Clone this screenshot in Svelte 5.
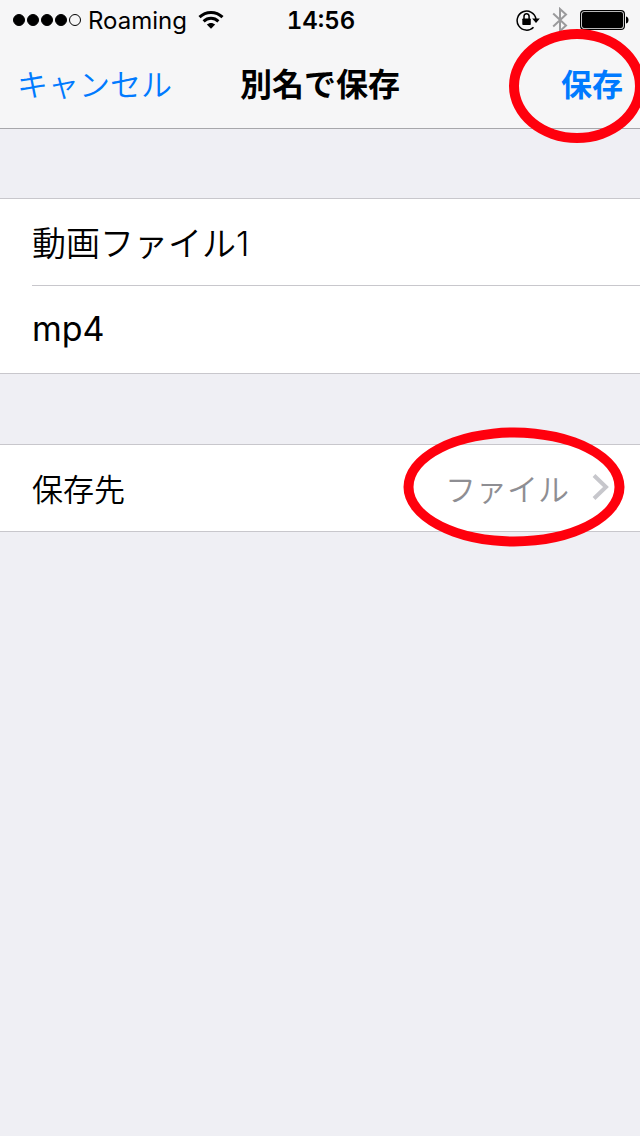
<script>
    let name = $state('動画ファイル1');
    let extension = $state('mp4');

    const signal = [true, true, true, true, false];
</script>

<div class="screen">
    <header>
        <div class="status-bar">
            <div class="status-left">
                <div class="signal">
                    {#each signal as on}
                        <span class="dot" class:on></span>
                    {/each}
                </div>
                <span>Roaming</span>
                <svg class="wifi" width="26" height="20" viewBox="0 0 26 20" aria-hidden="true">
                    <g fill="none" stroke="#000" stroke-width="3">
                        <path d="M1.5 7.2C8 0.9 18 0.9 24.500 7.200" />
                        <path d="M5.600 11.300C9.900 7.300 16.100 7.300 20.400 11.300" />
                    </g>
                    <path d="M8.800 14.500C11.200 12.400 14.800 12.400 17.200 14.500L13 18.800Z" />
                </svg>
            </div>
            <time class="clock">14:56</time>
            <div class="status-right">
                <svg width="24" height="22" viewBox="0 0 24 22" aria-hidden="true">
                    <path d="M17.500 18.200A9.500 9.500 0 1 1 20 10" fill="none" stroke="#000" stroke-width="1.500" />
                    <path d="M16.200 9.500H23.800L20 14Z" />
                    <rect x="6.300" y="9.500" width="8.500" height="6.500" rx="0.800" />
                    <path d="M8 10V7.600A2.550 2.800 0 0 1 13.100 7.600V10" fill="none" stroke="#000" stroke-width="1.500" />
                </svg>
                <svg width="16" height="26" viewBox="0 0 16 26" aria-hidden="true">
                    <path d="M1.200 6.500L14 18.500L8 24V2L14 7.500L1.200 19.500" fill="none" stroke="#9a9a9c" stroke-width="2" />
                </svg>
                <svg width="49" height="20" viewBox="0 0 49 20" aria-hidden="true">
                    <rect x="0.600" y="0.600" width="43.800" height="18.800" rx="3.500" fill="none" stroke="#000" stroke-width="1.200" />
                    <rect x="2" y="2" width="41" height="16" rx="2" />
                    <path d="M46 6.500C48 7 48.500 8.500 48.500 10S48 13 46 13.500Z" />
                </svg>
            </div>
        </div>
        <nav>
            <button class="cancel">キャンセル</button>
            <h1>別名で保存</h1>
            <button class="save">保存<span class="ring ring-save"></span></button>
        </nav>
    </header>

    <main>
        <div class="group">
            <div class="row">
                <input type="text" aria-label="ファイル名" bind:value={name} />
            </div>
            <div class="row">
                <input class="extension" type="text" aria-label="拡張子" bind:value={extension} />
            </div>
        </div>

        <div class="group">
            <button class="row destination">
                <span>保存先</span>
                <span class="value">
                    ファイル
                    <svg width="18" height="28" viewBox="0 0 18 28" aria-hidden="true">
                        <path d="M2 2.500L14 14L2 25.500" fill="none" stroke="#c7c7cc" stroke-width="4" />
                    </svg>
                    <span class="ring ring-value"></span>
                </span>
            </button>
        </div>
    </main>
</div>

<style>
    :global(body) {
        background: #efeff4;
    }

    .screen {
        min-height: 100vh;
        overflow-x: hidden;
        color: #000;
        font-family: Inter, 'Noto Sans CJK JP', sans-serif;
    }

    header {
        background: #f6f6f7;
        border-bottom: 1px solid #a7a7ab;
    }

    .status-bar {
        display: grid;
        grid-template-columns: 1fr auto 1fr;
        align-items: center;
        height: 40px;
        padding: 0 11px 0 13px;
        font-size: 24px;
    }

    .status-left,
    .status-right {
        display: flex;
        align-items: center;
    }

    .status-left {
        gap: 7px;
    }

    .status-right {
        justify-content: flex-end;
        gap: 12px;
    }

    .signal {
        display: flex;
        gap: 2px;
    }

    .dot {
        box-sizing: border-box;
        width: 12px;
        height: 12px;
        border: 1px solid #000;
        border-radius: 50%;
    }

    .dot.on {
        background: #000;
    }

    .wifi {
        margin-left: 4px;
    }

    .clock {
        font-weight: 600;
        font-variant-numeric: tabular-nums;
    }

    nav {
        display: grid;
        grid-template-columns: 1fr auto 1fr;
        align-items: center;
        box-sizing: border-box;
        height: 88px;
        padding: 0 17px 4px;
    }

    button {
        margin: 0;
        padding: 0;
        border: none;
        background: none;
        color: inherit;
        font: inherit;
        cursor: pointer;
    }

    h1 {
        margin: 0;
        font-size: 32px;
        font-weight: 700;
    }

    .cancel,
    .save {
        position: relative;
        color: #007aff;
        font-size: 31px;
    }

    .cancel {
        justify-self: start;
        font-weight: 350;
    }

    .save {
        justify-self: end;
        font-weight: 700;
    }

    main {
        display: flex;
        flex-direction: column;
        gap: 70px;
        padding-top: 69px;
    }

    .group {
        background: #fff;
        border: solid #c8c7cc;
        border-width: 1px 0;
    }

    .row {
        display: flex;
        align-items: center;
        box-sizing: border-box;
        height: 87px;
        margin-left: 32px;
        padding-bottom: 2px;
    }

    .row:not(:last-child) {
        border-bottom: 1px solid #c8c7cc;
    }

    input {
        flex: 1;
        min-width: 0;
        padding: 0;
        border: none;
        outline: none;
        background: none;
        color: inherit;
        font-family: inherit;
        font-size: 34px;
        font-weight: 350;
    }

    .extension {
        font-weight: 400;
    }

    .destination {
        justify-content: space-between;
        width: calc(100% - 32px);
        height: 86px;
        padding-right: 30px;
        font-size: 31px;
        font-weight: 350;
    }

    .value {
        position: relative;
        display: flex;
        align-items: center;
        gap: 23px;
        color: #8e8e93;
    }

    /* red markers around the two things to tap */
    .ring {
        position: absolute;
        top: 50%;
        left: 50%;
        box-sizing: border-box;
        border: 10px solid #ff000d;
        border-radius: 50%;
        transform: translate(-50%, -50%);
        pointer-events: none;
    }

    .ring-save {
        width: 136px;
        height: 114px;
        margin-top: 4px;
        margin-left: -15px;
    }

    .ring-value {
        width: 221px;
        height: 119px;
        margin-left: -14px;
    }
</style>
